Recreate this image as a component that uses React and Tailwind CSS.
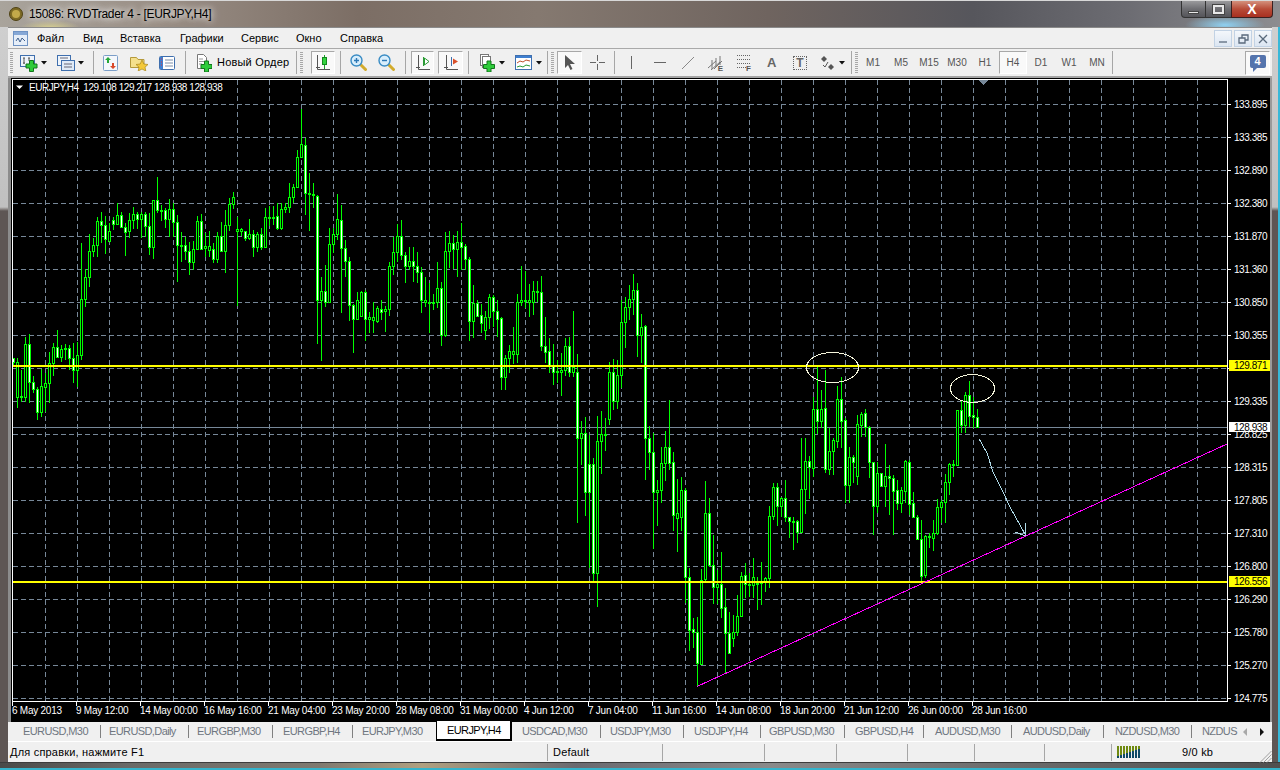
import React from "react";

// [high, bodyTop, bodyBottom, low, white], y in page pixels, x = 13 + 4 * index
const CANDLES = [
  [358,358,362,366,1],[358,362,397,408,0],[370,396,397,402,0],[337,344,397,402,0],[334,344,382,403,1],[376,382,389,393,1],[387,389,412,420,1],[369,386,412,417,0],
  [373,383,387,412,0],[352,363,383,403,0],[343,347,363,376,0],[330,347,357,358,1],[345,349,357,362,0],[344,348,349,360,0],[345,348,358,370,1],[343,358,370,383,1],
  [342,355,370,387,0],[243,299,355,360,0],[269,277,299,307,0],[234,251,277,287,0],[238,245,251,257,0],[217,221,245,257,0],[212,221,225,243,1],[216,225,239,254,1],
  [223,231,241,242,0],[217,220,224,230,1],[203,215,224,225,0],[212,215,227,228,1],[223,227,232,256,1],[213,220,231,238,0],[207,214,220,229,0],[212,214,219,229,1],
  [212,214,219,238,0],[212,214,226,237,1],[213,226,247,255,1],[200,200,247,259,0],[177,200,210,213,1],[205,210,211,221,0],[208,210,219,228,1],[199,209,219,237,0],
  [203,209,222,237,1],[215,222,245,282,1],[232,245,246,262,0],[237,245,251,260,1],[242,251,262,275,1],[241,249,262,270,0],[216,221,249,250,0],[214,221,249,250,1],
  [233,246,248,257,0],[231,246,250,257,0],[243,249,259,263,1],[232,236,259,263,0],[222,236,251,252,1],[210,225,251,273,0],[198,204,225,231,0],[192,197,204,209,0],
  [217,229,231,306,0],[228,229,231,236,0],[231,231,238,241,1],[219,234,238,240,0],[230,234,247,257,1],[232,234,247,252,0],[228,234,247,250,1],[208,217,247,247,0],
  [206,217,218,226,0],[206,217,217,225,0],[203,216,228,230,1],[203,209,228,230,0],[203,207,209,213,0],[183,197,207,213,0],[184,187,197,203,0],[150,157,187,188,0],
  [109,144,157,158,0],[138,145,193,215,1],[173,193,194,231,0],[183,194,195,208,0],[195,196,300,344,1],[277,291,300,361,0],[265,291,302,307,1],[228,244,302,303,0],
  [228,234,244,253,0],[194,219,234,240,0],[205,220,248,313,1],[240,248,261,277,1],[257,261,305,321,1],[304,305,319,353,1],[292,300,319,320,0],[291,292,316,317,0],
  [290,292,319,341,1],[312,317,319,333,0],[302,317,320,333,0],[306,308,321,323,0],[300,309,312,320,1],[306,309,311,332,0],[262,266,309,316,0],[237,252,266,275,0],
  [224,236,252,262,0],[220,236,255,260,1],[252,255,266,283,1],[247,261,266,270,0],[247,261,266,282,1],[252,266,272,283,1],[267,272,300,313,1],[277,300,302,307,0],
  [283,302,303,333,0],[294,302,303,310,0],[262,288,302,308,0],[282,288,335,346,1],[232,251,335,337,0],[231,243,251,268,0],[235,243,249,269,1],[231,242,249,277,0],
  [223,242,247,270,1],[244,246,259,270,1],[257,259,321,341,1],[285,303,321,338,0],[300,303,316,317,1],[304,315,323,333,1],[311,317,330,340,0],[294,297,317,329,0],
  [295,297,311,327,1],[300,311,319,337,1],[317,318,377,390,1],[355,358,377,390,0],[345,351,358,373,0],[327,351,354,364,0],[294,302,354,363,0],[266,300,302,306,0],
  [271,300,301,308,0],[284,300,302,317,0],[281,291,302,315,0],[281,291,292,302,0],[276,292,346,351,1],[317,346,352,363,1],[338,351,365,373,1],[344,365,372,385,1],
  [360,371,372,383,0],[353,370,372,396,0],[338,346,370,376,0],[337,346,372,377,1],[311,367,372,377,0],[354,372,438,523,1],[421,433,438,465,0],[417,433,492,516,1],
  [435,464,492,568,1],[458,464,573,582,1],[416,441,573,607,0],[411,434,441,474,0],[418,434,434,451,0],[362,372,419,425,0],[359,372,401,410,1],[360,375,401,409,0],
  [300,322,375,388,0],[297,307,322,348,0],[285,299,307,320,0],[274,290,299,315,0],[283,290,335,357,1],[314,327,335,363,0],[325,326,438,480,1],[426,438,452,470,1],
  [433,452,492,549,1],[480,490,492,526,0],[447,463,490,503,0],[431,447,463,481,0],[400,447,463,470,1],[452,462,515,531,1],[479,513,518,552,0],[477,490,517,531,0],
  [488,490,577,603,1],[568,577,630,651,1],[618,629,632,648,1],[617,632,663,687,1],[569,580,664,665,0],[481,513,579,582,0],[498,513,565,567,1],[535,565,587,604,1],
  [570,584,587,604,0],[552,584,608,618,1],[588,607,633,673,1],[612,633,653,654,1],[615,632,638,647,0],[595,616,632,636,0],[572,576,616,617,0],[563,575,584,598,1],
  [573,584,585,597,0],[558,577,585,598,0],[577,583,583,610,0],[562,582,583,605,0],[577,578,582,592,0],[506,516,578,588,0],[483,487,516,520,0],[483,487,506,526,1],
  [497,498,506,517,0],[480,498,517,522,1],[517,517,521,538,1],[517,521,522,550,0],[520,521,532,543,1],[438,489,532,533,0],[438,461,489,514,0],[456,461,467,499,1],
  [397,409,468,477,0],[365,409,421,434,1],[390,409,421,428,0],[370,408,469,473,1],[428,451,469,475,0],[438,440,451,475,0],[386,399,441,448,0],[377,399,421,448,1],
  [418,420,485,503,1],[447,457,485,503,0],[455,457,462,483,1],[415,424,476,485,0],[412,414,425,437,0],[409,413,427,437,1],[426,427,462,478,1],[462,462,506,535,1],
  [462,473,506,513,0],[473,473,486,487,1],[444,476,486,507,0],[465,476,478,515,1],[475,478,491,535,1],[480,490,503,510,1],[487,490,503,513,0],[460,461,491,503,0],
  [460,462,504,515,1],[492,503,517,518,1],[515,517,539,540,1],[520,539,576,581,1],[535,536,575,578,0],[533,536,537,548,0],[520,533,538,551,0],[499,507,533,535,0],
  [500,502,507,523,0],[474,482,502,523,0],[463,464,482,495,0],[460,464,465,477,0],[410,410,465,466,0],[400,410,425,433,1],[392,395,425,433,0],[381,395,416,427,1],
  [397,415,417,428,1],[409,417,427,427,1],
];

const PRICES = [
  ["133.895",104],["133.385",137],["132.890",170],["132.380",203],["131.870",236],["131.360",269],["130.850",302],["130.355",335],
  ["129.335",401],["128.825",434],["128.315",467],["127.805",500],["127.310",533],["126.800",566],["126.290",599],["125.780",632],["125.270",665],["124.775",698],
];
const GRID_Y = [104,137,170,203,236,269,302,335,368,401,434,467,500,533,566,599,632,665,698];
const DATES = ["6 May 2013","9 May 12:00","14 May 00:00","16 May 16:00","21 May 04:00","23 May 20:00","28 May 08:00","31 May 00:00","4 Jun 12:00","7 Jun 04:00","11 Jun 16:00","14 Jun 08:00","18 Jun 20:00","21 Jun 12:00","26 Jun 00:00","28 Jun 16:00"];

const MENU = [
  ["Файл", "w-[46px]"], ["Вид", "w-[37px]"], ["Вставка", "w-[60px]"], ["Графики", "w-[61px]"],
  ["Сервис", "w-[55px]"], ["Окно", "w-[44px]"], ["Справка", "w-[60px]"],
];

const TABS = [
  ["EURUSD,M30", "w-[93px] pl-[15px]"], ["EURUSD,Daily", "w-[88px] pl-[8px]"], ["EURGBP,M30", "w-[84px] pl-[8px]"], ["EURGBP,H4", "w-[80px] pl-[10px]"],
  ["EURJPY,M30", "w-[83px] pl-[9px]"], ["EURJPY,H4", "w-[76px] pl-[10px]", true], ["USDCAD,M30", "w-[89px] pl-[10px]"], ["USDJPY,M30", "w-[83px] pl-[9px]"],
  ["USDJPY,H4", "w-[77px] pl-[10px]"], ["GBPUSD,M30", "w-[84px] pl-[8px]"], ["GBPUSD,H4", "w-[79px] pl-[10px]"], ["AUDUSD,M30", "w-[88px] pl-[11px]"],
  ["AUDUSD,Daily", "w-[92px] pl-[11px]"], ["NZDUSD,M30", "w-[88px] pl-[11px]"],
];

const PERIODS = ["M1", "M5", "M15", "M30", "H1", "H4", "D1", "W1", "MN"];
const toggled = "border border-t-[#a8a8a8] border-l-[#a8a8a8] border-r-white border-b-white bg-[#f9f9f9]";

function Sep({ className }) {
  return <div className={`w-px h-[23px] bg-[#a6a6a6] shrink-0 ${className}`} />;
}

function Grip({ className }) {
  return <div className={`w-[3px] h-[21px] shrink-0 bg-[repeating-linear-gradient(0deg,#a8a8a8_0_1px,transparent_1px_2px)] ${className}`} />;
}

function Caret({ className }) {
  return (
    <svg width="6" height="4" viewBox="0 0 6 4" className={`shrink-0 ${className}`}>
      <polygon points="0,0 6,0 3,3.5" fill="#111" />
    </svg>
  );
}

function GreenPlus({ x, y }) {
  return (
    <path
      d={`M${x + 3.5} ${y + .5}h4v3.5h3.5v4h-3.5v3.5h-4v-3.5h-3.5v-4h3.5z`}
      fill="#2ecb3a"
      stroke="#12761c"
    />
  );
}

function AddChartIcon() {
  return (
    <svg width="18" height="18" viewBox="0 0 18 18" className="shrink-0">
      <rect x=".5" y="1.5" width="14" height="11" fill="#eef4fb" stroke="#3f6fae" />
      <path d="M4 4v6M3 4h2M3 9h2M9 4v3M8 4h2" stroke="#555" fill="none" />
      <GreenPlus x={6} y={6} />
    </svg>
  );
}

function ProfilesIcon() {
  return (
    <svg width="18" height="18" viewBox="0 0 18 18" className="shrink-0">
      <rect x=".5" y="1.5" width="13" height="10" fill="#eef4fb" stroke="#3f6fae" />
      <rect x="4.5" y="6.5" width="13" height="10" fill="#dfeaf7" stroke="#3f6fae" />
      <path d="M7 10h8M7 13h8M3 4h8" stroke="#667" fill="none" />
    </svg>
  );
}

function MarketIcon() {
  return (
    <svg width="15" height="16" viewBox="0 0 15 16" className="shrink-0">
      <rect x=".5" y=".5" width="14" height="15" rx="1" fill="#f4f7fb" stroke="#7b9ec8" />
      <path d="M5 2l3 3H6v3H4V5H2z" fill="#26a838" />
      <path d="M10 14l-3-3h2V8h2v3h2z" fill="#d9482b" />
    </svg>
  );
}

function FolderStarIcon() {
  return (
    <svg width="18" height="17" viewBox="0 0 18 17" className="shrink-0">
      <path d="M.5 3.5h6l1.5 2h6v8H.5z" fill="#f5e08c" stroke="#b59a3c" />
      <polygon points="12,6 13.8,10 18,10.5 15,13.2 15.8,17 12,15 8.2,17 9,13.2 6,10.5 10.2,10" fill="#f4c93a" stroke="#a8851c" strokeWidth=".7" />
    </svg>
  );
}

function NavigatorIcon() {
  return (
    <svg width="16" height="14" viewBox="0 0 16 14" className="shrink-0">
      <rect x=".5" y=".5" width="15" height="13" rx="1" fill="#fff" stroke="#3f6fae" />
      <rect x="1" y="1" width="3" height="12" fill="#3f7fd0" />
      <path d="M6 4h8M6 7h8M6 10h8" stroke="#7a8ea8" />
      <path d="M2 3h1M2 6h1M2 9h1" stroke="#e33" />
    </svg>
  );
}

function NewOrderIcon() {
  return (
    <svg width="16" height="18" viewBox="0 0 16 18" className="shrink-0">
      <path d="M1.500 .5h6l3 3v11h-9z" fill="#fff" stroke="#777" />
      <path d="M3 5h4M3 7.500h5M3 10h3" stroke="#999" />
      <GreenPlus x={5} y={6.500} />
    </svg>
  );
}

function CandleToggleIcon() {
  return (
    <svg width="16" height="17" viewBox="0 0 16 17">
      <path d="M2.500 1v14.500H15" stroke="#555" fill="none" />
      <path d="M1 13.500h4" stroke="#555" />
      <path d="M9.500 1v14" stroke="#1a9e28" />
      <rect x="7.500" y="3.500" width="4" height="7" fill="#32d23e" stroke="#138a1e" />
    </svg>
  );
}

function Zoom({ minus }) {
  return (
    <svg width="17" height="17" viewBox="0 0 17 17" className="shrink-0">
      <path d="M10 10l5.500 5.500" stroke="#d2ab2c" strokeWidth="3" strokeLinecap="round" />
      <circle cx="6.500" cy="6.500" r="5.500" fill="#d8eefc" stroke="#3a8cc4" strokeWidth="1.400" />
      <path d={minus ? "M4 6.500h5" : "M4 6.500h5M6.500 4v5"} stroke="#2e79b6" strokeWidth="1.400" />
    </svg>
  );
}

function ShiftIcon({ arrow }) {
  return (
    <svg width="16" height="17" viewBox="0 0 16 17">
      <path d="M3.500 1v14.500H15M1 13.500h4" stroke="#555" fill="none" />
      <path d="M8.500 3v9" stroke={arrow === "green" ? "#2a9a34" : "#3f6fae"} />
      {arrow === "green" ? (
        <polygon points="9.500,4 14,7.500 9.500,11" fill="#fff" stroke="#2a9a34" />
      ) : (
        <polygon points="15,7.500 10,4.500 10,10.500" fill="#d8502c" />
      )}
    </svg>
  );
}

function TemplateIcon() {
  return (
    <svg width="15" height="18" viewBox="0 0 15 18" className="shrink-0">
      <rect x=".5" y=".5" width="8" height="11" fill="#fff" stroke="#777" />
      <rect x="2.500" y="2.500" width="8" height="11" fill="#fff" stroke="#777" />
      <GreenPlus x={3.500} y={6.500} />
    </svg>
  );
}

function IndicatorsIcon() {
  return (
    <svg width="17" height="15" viewBox="0 0 17 15" className="shrink-0">
      <rect x=".5" y=".5" width="16" height="14" fill="#fff" stroke="#3f6fae" />
      <rect x="1" y="1" width="15" height="2" fill="#3f7fd0" />
      <path d="M2 8l3-2 3 1 3-2 4 1" stroke="#c2502c" fill="none" />
      <path d="M2 12l3-1 3 1 3-2 4 1" stroke="#2a9a34" fill="none" />
    </svg>
  );
}

function ToolIcon({ d, w = 15, h = 15, stroke = "#666" }) {
  return (
    <svg width={w} height={h} viewBox={`0 0 ${w} ${h}`} className="shrink-0">
      <path d={d} stroke={stroke} fill="none" />
    </svg>
  );
}

function Toolbar() {
  return (
    <div className="h-[28px] shrink-0 flex items-center bg-[#f0f0f0] border-t border-[#a9a9a9]">
      <Grip className="ml-[2px]" />
      <div className="ml-[7px] w-[18px] flex justify-center"><AddChartIcon /></div>
      <Caret className="ml-[3px]" />
      <div className="ml-[10px] w-[18px] flex justify-center"><ProfilesIcon /></div>
      <Caret className="ml-[3px]" />
      <Sep className="ml-[9px]" />
      <div className="ml-[9px] w-[15px] flex justify-center"><MarketIcon /></div>
      <div className="ml-[12px] w-[18px] flex justify-center"><FolderStarIcon /></div>
      <div className="ml-[11px] w-[16px] flex justify-center"><NavigatorIcon /></div>
      <Sep className="ml-[10px]" />
      <div className="ml-[10px] w-[16px] flex justify-center"><NewOrderIcon /></div>
      <span className="ml-[5px] w-[74px] shrink-0 text-[11px] tracking-[0.2px] text-black whitespace-nowrap">Новый Ордер</span>
      <Sep className="ml-[5px]" />
      <Grip className="ml-[3px]" />
      <div className={`ml-[8px] w-[24px] h-[23px] shrink-0 flex items-center justify-center ${toggled}`}><CandleToggleIcon /></div>
      <Sep className="ml-[5px]" />
      <div className="ml-[9px] w-[16px] flex justify-center"><Zoom /></div>
      <div className="ml-[12px] w-[16px] flex justify-center"><Zoom minus /></div>
      <Sep className="ml-[11px]" />
      <div className={`ml-[5px] w-[23px] h-[23px] shrink-0 flex items-center justify-center ${toggled}`}><ShiftIcon arrow="green" /></div>
      <div className={`ml-[4px] w-[25px] h-[23px] shrink-0 flex items-center justify-center ${toggled}`}><ShiftIcon arrow="red" /></div>
      <Sep className="ml-[5px]" />
      <div className="ml-[11px] w-[15px] flex justify-center"><TemplateIcon /></div>
      <Caret className="ml-[4px]" />
      <div className="ml-[10px] w-[17px] flex justify-center"><IndicatorsIcon /></div>
      <Caret className="ml-[4px]" />
      <Sep className="ml-[5px]" />
      <Grip className="ml-[3px]" />
      <div className={`ml-[3px] w-[25px] h-[23px] shrink-0 flex items-center justify-center ${toggled}`}>
        <svg width="12" height="16" viewBox="0 0 12 16"><polygon points="1,0 1,13 4,10 6.500,15 8.500,14 6,9 11,9" fill="#555" /></svg>
      </div>
      <div className="ml-[8px] w-[15px] flex justify-center"><ToolIcon d="M0 7.500h6M9 7.500h6M7.500 0v6M7.500 9v6" /></div>
      <Sep className="ml-[9px]" />
      <div className="ml-[9px] w-[15px] flex justify-center"><ToolIcon d="M7.500 1v13" /></div>
      <div className="ml-[15px] w-[12px] flex justify-center"><ToolIcon w={12} d="M0 7.500h12" /></div>
      <div className="ml-[15px] w-[14px] flex justify-center"><ToolIcon w={14} d="M1 14L13 2" stroke="#888" /></div>
      <div className="ml-[13px] w-[15px] relative h-[18px] flex justify-center items-center">
        <ToolIcon d="M0 13L8 6M3 15L12 7M6 14L14 6M4 5v9M8 3v9M12 1v9" stroke="#777" />
        <span className="absolute right-0 bottom-[-1px] text-[8px] leading-none font-bold text-[#555]">E</span>
      </div>
      <div className="ml-[14px] w-[14px] relative h-[18px] flex justify-center items-center">
        <svg width="14" height="13" viewBox="0 0 14 13" className="mb-[3px]"><path d="M0 .5h14M0 4.500h14M0 8.500h14M0 12.500h9" stroke="#666" strokeDasharray="1 1" fill="none" /></svg>
        <span className="absolute right-0 bottom-[-1px] text-[8px] leading-none font-bold text-[#555]">F</span>
      </div>
      <span className="ml-[16px] w-[9px] shrink-0 text-[13px] leading-none font-bold text-[#666] text-center">A</span>
      <div className="ml-[17px] w-[14px] h-[14px] shrink-0 border border-dotted border-[#666] flex items-center justify-center">
        <span className="text-[12px] leading-none font-bold text-[#666]">T</span>
      </div>
      <div className="ml-[14px] w-[14px] flex justify-center">
        <svg width="14" height="14" viewBox="0 0 14 14"><polygon points="0,3 3,0 6,3 3,6" fill="#555" /><polygon points="7,11 10,8 13,11 10,14" fill="#555" /><path d="M2 9l2 2 3-5" stroke="#555" fill="none" /></svg>
      </div>
      <Caret className="ml-[4px]" />
      <Sep className="ml-[6px]" />
      <Grip className="ml-[3px]" />
      <div className="ml-[1px] flex shrink-0">
        {PERIODS.map((p) => (
          <div
            key={p}
            className={`w-[28px] h-[23px] flex items-center justify-center text-[10px] text-[#555] ${p === "H4" ? toggled : ""}`}
          >
            {p}
          </div>
        ))}
      </div>
      <Sep className="ml-[1px]" />
      <div className={`ml-auto mr-[2px] w-[25px] h-[24px] shrink-0 flex items-center justify-center ${toggled}`}>
        <div className="relative w-[16px] h-[13px] mb-[2px] bg-[#5474ad] rounded-[2px] flex items-center justify-center text-white text-[11px] leading-none font-bold">
          4
          <span className="absolute left-[3px] top-[13px] w-0 h-0 border-t-[4px] border-t-[#5474ad] border-r-[4px] border-r-transparent" />
        </div>
      </div>
    </div>
  );
}

function Chart() {
  return (
    <svg
      width="1259"
      height="644"
      viewBox="11 78 1259 644"
      className="shrink-0 bg-black text-[10px] tracking-[-0.45px]"
      shapeRendering="crispEdges"
    >
      {/* grid */}
      {GRID_Y.map((y) => (
        <path key={y} d={`M13 ${y + .5}H1227`} stroke="#778899" strokeDasharray="5 3" />
      ))}
      {Array.from({ length: 37 }, (_, k) => 45 + 32 * k).map((x) => (
        <path key={x} d={`M${x + .5} 80V701`} stroke="#778899" strokeDasharray="5 3" />
      ))}

      {/* last price line, behind the bars */}
      <path d="M13 427.500H1227" stroke="#778899" />

      {/* candles */}
      {CANDLES.map(([hi, top, bot, lo, white], i) => {
        const x = 13 + 4 * i;
        return (
          <g key={i}>
            <path d={`M${x + .5} ${hi}V${lo}`} stroke="#00ff00" />
            <rect
              x={x - .5}
              y={top + .5}
              width="2"
              height={Math.max(bot - top, 1)}
              fill={white ? "#ffffff" : "#000000"}
              stroke="#00ff00"
            />
          </g>
        );
      })}

      {/* horizontal levels */}
      <rect x="13" y="365" width="1214" height="2" fill="#ffff00" />
      <rect x="13" y="581" width="1214" height="2" fill="#ffff00" />

      {/* trend line */}
      <path d="M697 686.500L1227 444" stroke="#ff00ff" />

      {/* hand drawn marks */}
      <g fill="none">
        <ellipse cx="832.500" cy="367.500" rx="26" ry="15" stroke="#f5f5dc" />
        <ellipse cx="972.500" cy="388.500" rx="22" ry="14" stroke="#f5f5dc" />
        <path d="M979.500 439.500L987 453L993 472L1003 492L1010 507L1026 536L1025 523M1026 536L1015 532" stroke="#add8e6" />
      </g>

      {/* frame and ticks */}
      <path d="M12.500 79V701.500M12 79.500H1227.500V701.500H12M12 701.500" stroke="#ffffff" fill="none" />
      {GRID_Y.map((y) => (
        <path key={y} d={`M1228 ${y + .5}H1231`} stroke="#ffffff" />
      ))}
      {DATES.map((d, k) => (
        <path key={d} d={`M${12.5 + 64 * k} 702V706`} stroke="#ffffff" />
      ))}
      <polygon points="978,80 988,80 983,85" fill="#778899" />

      <g shapeRendering="auto">
        {/* price axis */}
        {PRICES.map(([t, y]) => (
          <text key={t} x="1234" y={y + 4} fill="#ffffff">{t}</text>
        ))}
        <rect x="1229" y="360" width="41" height="11" fill="#ffff00" shapeRendering="crispEdges" />
        <text x="1234" y="369" fill="#000000">129.871</text>
        <rect x="1229" y="576" width="41" height="11" fill="#ffff00" shapeRendering="crispEdges" />
        <text x="1234" y="585" fill="#000000">126.556</text>
        <rect x="1229" y="422" width="41" height="10" fill="#ffffff" shapeRendering="crispEdges" />
        <text x="1234" y="431" fill="#000000">128.938</text>

        {/* time axis */}
        {DATES.map((d, k) => (
          <text key={d} x={12 + 64 * k} y="714" fill="#ffffff" className="tracking-[-0.25px]">{d}</text>
        ))}

        {/* chart header */}
        <polygon points="16,85.500 23,85.500 19.500,89" fill="#ffffff" />
        <text x="29" y="91" fill="#ffffff" xmlSpace="preserve">EURJPY,H4  129.108 129.217 128.938 128.938</text>
      </g>
    </svg>
  );
}

function Tabs() {
  return (
    <div className="h-[19px] shrink-0 flex items-center bg-[#f0f0f0] text-[11px] tracking-[-0.6px] text-[#6f7680]">
      {TABS.map(([label, size, active]) =>
        active ? (
          <div key={label} className={`${size} h-[20px] -mt-px shrink-0 flex items-center bg-white border border-black border-r-2 border-b-2 border-t-0 text-black`}>
            {label}
          </div>
        ) : (
          <div key={label} className={`${size} shrink-0 flex items-center justify-between whitespace-nowrap`}>
            <span className="-mt-px">{label}</span>
            {label !== "EURJPY,M30" && <span className="w-px h-[13px] bg-[#808080]" />}
          </div>
        )
      )}
      <div className="w-[48px] pl-[10px] -mt-px shrink-0 whitespace-nowrap">NZDUS</div>
      <svg width="5" height="8" viewBox="0 0 5 8" className="ml-[3px] shrink-0"><polygon points="4,0 4,8 0,4" fill="#a9a9a9" /></svg>
      <svg width="5" height="8" viewBox="0 0 5 8" className="ml-[12px] shrink-0"><polygon points="0,0 0,8 4,4" fill="#111" /></svg>
    </div>
  );
}

function StatusBar() {
  const cell = "h-[17px] shrink-0 border-l border-[#a6a6a6]";
  return (
    <div className="h-[21px] shrink-0 flex items-center bg-[#f0f0f0] border-t border-white text-[11px] tracking-[0.2px] text-black">
      <div className="w-[539px] pl-[2px] shrink-0">Для справки, нажмите F1</div>
      <div className={`${cell} w-[115px] pl-[5px]`}>Default</div>
      <div className={`${cell} w-[102px]`} />
      <div className={`${cell} w-[72px]`} />
      <div className={`${cell} w-[71px]`} />
      <div className={`${cell} w-[67px]`} />
      <div className={`${cell} w-[70px]`} />
      <div className={`${cell} w-[67px]`} />
      <div className={`${cell} flex-1 flex items-center pl-[5px] relative`}>
        <svg width="24" height="12" viewBox="0 0 24 12" className="shrink-0" shapeRendering="crispEdges">
          {Array.from({ length: 8 }, (_, k) => (
            <g key={k}>
              <rect x={k * 3} y={0} width="2" height={10 - k} fill="#6f8a10" />
              <rect x={k * 3} y={10 - k} width="2" height={2 + k} fill="#0f4a66" />
            </g>
          ))}
        </svg>
        <span className="ml-[41px]">9/0 kb</span>
        <svg width="13" height="13" viewBox="0 0 13 13" className="absolute right-0 bottom-[-2px]">
          <path d="M12.500 1L1 12.500M12.500 4.500L4.500 12.500M12.500 8L8 12.500" stroke="#a0a0a0" />
        </svg>
      </div>
    </div>
  );
}

export default function App() {
  return (
    <div className="w-[1280px] h-[770px] overflow-hidden flex flex-col [font-family:'Liberation_Sans',Arial,sans-serif] bg-[#6a625e]">
      {/* title bar */}
      <div className="h-[27px] shrink-0 flex items-start bg-[radial-gradient(ellipse_40px_10px_at_1225px_24px,#8fd0f0,transparent),radial-gradient(ellipse_30px_8px_at_50px_27px,#d8d090,transparent),linear-gradient(90deg,#a9a49c_0%,#9a8f86_12%,#7c6e65_28%,#857970_42%,#6f645f_60%,#56565c_76%,#6c6c72_88%,#8d8d90_100%)] border-t border-[#d8d8d8]">
        <div className="ml-[9px] mt-[6px] w-[14px] h-[14px] shrink-0 rounded-full bg-[#7d6a24] border border-[#4e4215] flex items-center justify-center">
          <div className="w-[8px] h-[8px] rounded-full bg-[#c2a94a]" />
        </div>
        <span className="ml-[6px] mt-[5px] w-[182px] text-[12px] leading-[16px] tracking-[-0.3px] text-black whitespace-nowrap [text-shadow:0_0_6px_#ffffff,0_0_10px_#e8e8e8]">
          15086: RVDTrader 4 - [EURJPY,H4]
        </span>
        <div className="ml-auto mr-[7px] h-[17px] flex shrink-0">
          <div className="w-[25px] flex items-center justify-center rounded-bl-[4px] bg-[linear-gradient(#9a9a9c,#6e6e72_50%,#55555a)] border border-t-0 border-[#333]">
            <div className="w-[11px] h-[3px] mt-[6px] bg-[#e8e8e8] border border-[#444]" />
          </div>
          <div className="w-[25px] flex items-center justify-center bg-[linear-gradient(#9a9a9c,#6e6e72_50%,#55555a)] border-b border-[#333]">
            <div className="w-[11px] h-[9px] border-2 border-[#e8e8e8] outline outline-1 outline-[#444]" />
          </div>
          <div className="w-[42px] flex items-center justify-center rounded-br-[4px] bg-[linear-gradient(#d4907c,#b84c38_50%,#a83020)] border border-t-0 border-[#3a2020] text-white text-[14px] font-bold leading-none">
            X
          </div>
        </div>
      </div>

      <div className="flex-1 min-h-0 flex">
        <div className="w-[8px] shrink-0 bg-[linear-gradient(#cfcfcf_0,#c0c0c0_180px,#5e5654_184px,#5e5654_100%)]" />
        <div className="w-[1264px] shrink-0 flex flex-col border-t border-[#8a8a8a]">
          {/* menu bar */}
          <div className="h-[20px] shrink-0 flex items-center bg-[#f0f0f0] text-[11px] text-black">
            <svg width="15" height="15" viewBox="0 0 15 15" className="ml-[5px] shrink-0">
              <rect x=".5" y=".5" width="14" height="14" fill="#e6eef8" stroke="#6f93c4" />
              <rect x="1" y="1" width="13" height="3" fill="#86a8d6" />
              <path d="M3 10l2-3 2 4 2-4 3 3" stroke="#41618e" fill="none" />
            </svg>
            <div className="ml-[9px] flex">
              {MENU.map(([label, w]) => (
                <span key={label} className={`${w} shrink-0`}>{label}</span>
              ))}
            </div>
            <div className="ml-auto flex gap-[2px]">
              {["M4 11h8", "M4 7h6v5H4zM7 7V4h6v5h-3", "M4 4l8 8M12 4l-8 8"].map((d) => (
                <div key={d} className="w-[18px] h-[17px] border border-[#c2d2e4] bg-[linear-gradient(#f4f7fb,#dce6f2)] flex items-center justify-center">
                  <svg width="16" height="15" viewBox="0 0 16 15"><path d={d} stroke="#5a6a7c" strokeWidth="1.300" fill="none" /></svg>
                </div>
              ))}
            </div>
          </div>

          <Toolbar />
          <div className="h-[2px] shrink-0 bg-[#a5a5a5]" />

          {/* chart */}
          <div className="h-[644px] shrink-0 flex bg-[#6f6f6f]">
            <div className="w-[3px] shrink-0 bg-[#8c8c8c]" />
            <Chart />
            <div className="w-[2px] shrink-0 bg-[#9a9a9a]" />
          </div>

          <Tabs />
          <StatusBar />
        </div>
        <div className="w-[8px] shrink-0 bg-[linear-gradient(90deg,transparent_75%,#38b8d8_75%),linear-gradient(#cfcfcf_0,#c0c0c0_180px,#5e5654_184px,#5e5654_100%)]" />
      </div>

      {/* bottom frame */}
      <div className="h-[8px] shrink-0 bg-[linear-gradient(90deg,#4a4a48_0%,#6a6a68_10%,#807a70_25%,#b0a080_33%,#6a6a70_45%,#8a8a8a_60%,#6a6a6a_80%,#505050_100%)] border-t border-[#3c3c3c] border-b-2 border-b-[#34b4cc]" />
    </div>
  );
}
